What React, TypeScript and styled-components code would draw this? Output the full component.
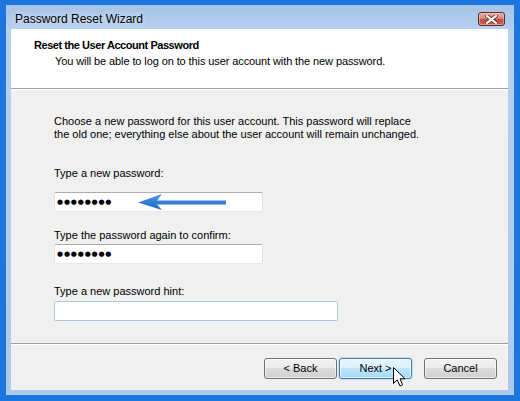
import React from 'react';
import styled, { createGlobalStyle, css } from 'styled-components';

// Global page reset
const GlobalStyle = createGlobalStyle`
  html, body {
    margin: 0;
    padding: 0;
    background: #1d76dd;
  }
  * {
    box-sizing: border-box;
  }
`;

const Desktop = styled.div`
  width: 520px;
  height: 401px;
  padding: 5px 6px 6px 6px;
  background: #1d76dd;
  display: flex;
`;

const Window = styled.div`
  flex: 1;
  display: flex;
  flex-direction: column;
  background: linear-gradient(to bottom, #a4c3e8 0px, #b6d0ee 24px, #adcaec 100%);
  padding: 0 6px 5px 5px;
  font-family: 'Liberation Sans', Arial, sans-serif;
`;

const TitleBar = styled.div`
  height: 24px;
  display: flex;
  align-items: flex-start;
  justify-content: space-between;
  padding: 0 3px 0 4px;
`;

const Caption = styled.div`
  font-size: 12px;
  line-height: 24px;
  padding-top: 2px;
  color: #000;
  text-shadow: 0 0 6px rgba(255, 255, 255, 0.9);
`;

const CloseButton = styled.div`
  margin-top: 7px;
  width: 27px;
  height: 14px;
  border: 1px solid #5e2a25;
  border-radius: 3px;
  background: linear-gradient(to bottom, #e4a99e 0%, #d88a7c 45%, #c2483a 55%, #cf6a58 100%);
  box-shadow: inset 0 0 0 1px rgba(255, 255, 255, 0.35);
  display: flex;
  align-items: center;
  justify-content: center;
`;

const Client = styled.div`
  flex: 1;
  display: flex;
  flex-direction: column;
  background: #f0f0f0;
  color: #000;
  font-size: 11px;
  line-height: 13px;
`;

const Header = styled.div`
  height: 60px;
  background: #fff;
  border-bottom: 1px solid #a0a0a0;
  padding: 10px 0 0 23px;
`;

const HeaderTitle = styled.div`
  font-weight: bold;
  letter-spacing: -0.45px;
`;

const HeaderSub = styled.div`
  margin: 3px 0 0 21px;
  letter-spacing: -0.1px;
`;

const Body = styled.div`
  flex: 1;
  display: flex;
  flex-direction: column;
  box-shadow: inset 0 1px #ffffff;
`;

const Form = styled.div`
  flex: 1;
  padding: 26px 0 0 43px;
`;

const Field = styled.div<{ $top: number }>`
  margin-top: ${(p) => p.$top}px;
`;

const Label = styled.div<{ $gap: number }>`
  margin-bottom: ${(p) => p.$gap}px;
`;

const TextBox = styled.div<{ $width: number; $hot?: boolean }>`
  position: relative;
  width: ${(p) => p.$width}px;
  height: 20px;
  background: #fff;
  border: 1px solid;
  border-radius: 2px;
  border-color: #abadb3 #e2e3ea #e3e9ef #e2e3ea;
  padding-left: 2px;
  display: flex;
  align-items: center;
  ${(p) =>
    p.$hot &&
    css`
      border-color: #a9c9e6;
    `}
`;

const Dots = styled.span`
  font-family: 'DejaVu Sans', sans-serif;
  font-size: 7px;
  letter-spacing: 0.8px;
  line-height: 10px;
  color: #000;
`;

const Arrow = styled.svg`
  position: absolute;
  left: 83px;
  top: 1px;
`;

const Footer = styled.div`
  display: flex;
  justify-content: flex-end;
  border-top: 1px solid #a0a0a0;
  box-shadow: inset 0 1px #ffffff;
  padding: 14px 11px 11px 0;
`;

const Button = styled.div<{ $focused?: boolean; $spaced?: boolean }>`
  position: relative;
  width: 73px;
  height: 21px;
  margin-left: ${(p) => (p.$spaced ? 12 : 2)}px;
  border: 1px solid #707070;
  border-radius: 3px;
  background: linear-gradient(to bottom, #f2f2f2 0%, #ebebeb 50%, #dddddd 50%, #cfcfcf 100%);
  box-shadow: inset 0 0 0 1px rgba(255, 255, 255, 0.6);
  display: flex;
  align-items: center;
  justify-content: center;
  font-size: 11px;
  color: #000;
  ${(p) =>
    p.$focused &&
    css`
      border-color: #3c7fb1;
      background: linear-gradient(to bottom, #eaf6fd 0%, #d9f0fc 50%, #bee6fd 50%, #a7d9f5 100%);
      box-shadow: inset 0 0 0 1px rgba(255, 255, 255, 0.7), 0 0 2px #62bbe8;
    `}
`;

const Cursor = styled.svg`
  position: absolute;
  left: 53px;
  top: 8px;
`;

const PASSWORD = '●●●●●●●●';

const App: React.FC = () => {
  return (
    <>
      <GlobalStyle />
      <Desktop>
        <Window>
          <TitleBar>
            <Caption>Password Reset Wizard</Caption>
            <CloseButton>
              <svg width="13" height="9" viewBox="0 0 13 9">
                <path d="M2 1 L11 8 M11 1 L2 8" stroke="#5a2520" strokeWidth="3.6" strokeLinecap="square" />
                <path d="M2 1 L11 8 M11 1 L2 8" stroke="#ffffff" strokeWidth="2.2" strokeLinecap="square" />
              </svg>
            </CloseButton>
          </TitleBar>
          <Client>
            <Header>
              <HeaderTitle>Reset the User Account Password</HeaderTitle>
              <HeaderSub>You will be able to log on to this user account with the new password.</HeaderSub>
            </Header>
            <Body>
              <Form>
                <div>
                  Choose a new password for this user account. This password will replace
                  <br />
                  the old one; everything else about the user account will remain unchanged.
                </div>
                <Field $top={26}>
                  <Label $gap={12}>Type a new password:</Label>
                  <TextBox $width={209}>
                    <Dots>{PASSWORD}</Dots>
                    <Arrow width="90" height="18" viewBox="0 0 90 18">
                      <defs>
                        <linearGradient id="arrowFill" x1="0" y1="0" x2="0" y2="1">
                          <stop offset="0" stopColor="#4a95e6" />
                          <stop offset="1" stopColor="#1d68c9" />
                        </linearGradient>
                      </defs>
                      <path
                        d="M0 8.5 L24 0 L19 6.5 L88 6.5 L88 10.5 L19 10.5 L24 16 Z"
                        fill="url(#arrowFill)"
                      />
                    </Arrow>
                  </TextBox>
                </Field>
                <Field $top={17}>
                  <Label $gap={2}>Type the password again to confirm:</Label>
                  <TextBox $width={209}>
                    <Dots>{PASSWORD}</Dots>
                  </TextBox>
                </Field>
                <Field $top={21}>
                  <Label $gap={3}>Type a new password hint:</Label>
                  <TextBox $width={284} $hot />
                </Field>
              </Form>
              <Footer>
                <Button>&lt; Back</Button>
                <Button $focused>
                  Next &gt;
                  <Cursor width="14" height="21" viewBox="0 0 14 21">
                    <path
                      d="M0.5 0.5 L0.5 16.5 L4.3 12.8 L7 19 L9.6 17.9 L7 11.8 L12 11.8 Z"
                      fill="#ffffff"
                      stroke="#000000"
                      strokeWidth="1"
                      strokeLinejoin="miter"
                    />
                  </Cursor>
                </Button>
                <Button $spaced>Cancel</Button>
              </Footer>
            </Body>
          </Client>
        </Window>
      </Desktop>
    </>
  );
};

export default App;
